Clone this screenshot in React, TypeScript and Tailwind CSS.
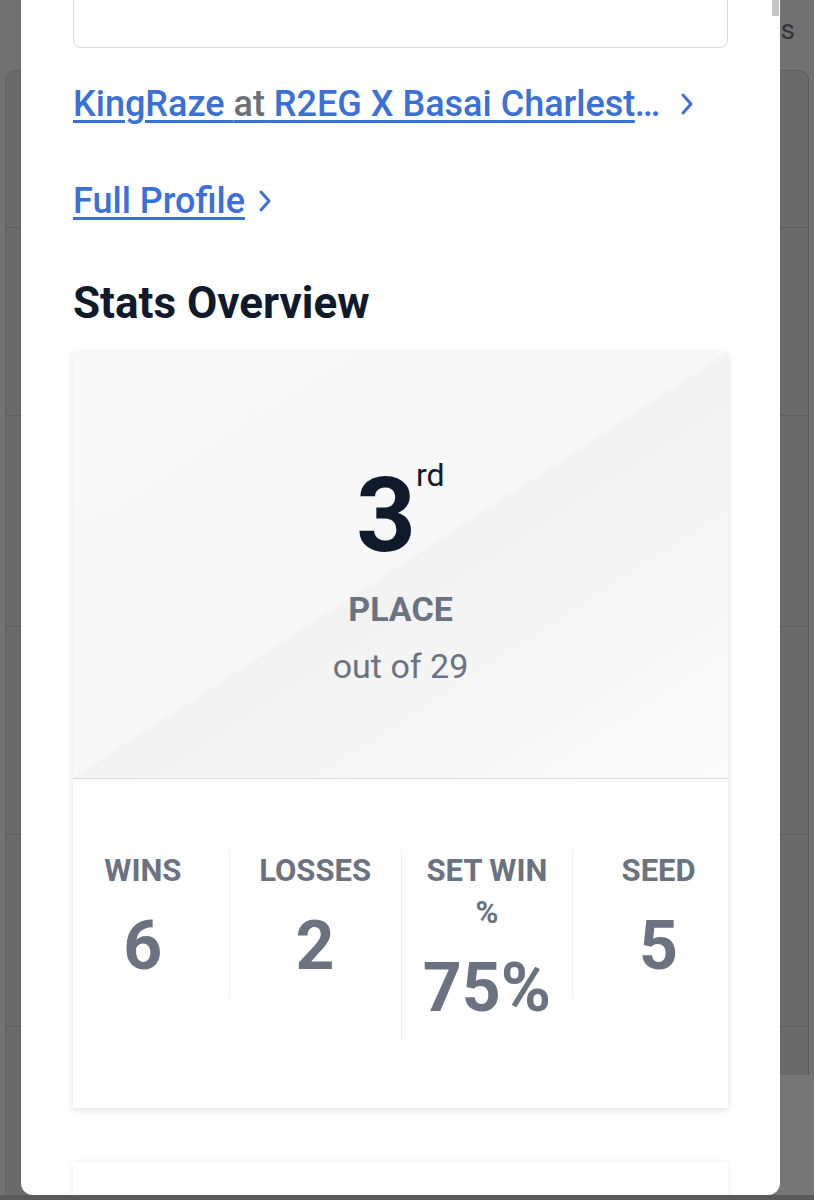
import React from "react";

function Chevron({ className }: { className?: string }) {
  return (
    <svg className={className} width="14" height="24" viewBox="0 0 14 24" fill="none">
      <path d="M3 3 L11 12 L3 21" stroke="#3b70d6" strokeWidth="3" strokeLinecap="round" strokeLinejoin="round" />
    </svg>
  );
}

function Stat({ label, value, first }: { label: string; value: string; first?: boolean }) {
  return (
    <div className="px-4">
      <div
        className={`flex flex-col items-center pb-[18px] ${first ? "" : "border-l border-[#eeeeee]"} -ml-4 pl-4`}
      >
        <div className="text-center text-[31px] leading-[42px] font-bold text-[#6b7280]">{label}</div>
        <div className="mt-[20px] text-center text-[68px] leading-[68px] font-bold text-[#6b7280]">{value}</div>
      </div>
    </div>
  );
}

export default function App() {
  return (
    <div className="relative w-[814px] h-[1200px] overflow-hidden bg-[#717171] [font-family:Roboto,'Noto_Sans',sans-serif]">
      {/* background page */}
      <div className="flex flex-col h-full">
        <div className="h-[70px] flex justify-end pr-[19px] pt-[14px]">
          <span className="text-[28px] leading-[32px] text-[#353535]">Results</span>
        </div>
        <div className="mx-[5px] flex-1 rounded-t-[10px] border border-b-0 border-[#5f5f5f] bg-[#6a6a6a] flex flex-col">
          <div className="h-[157px] border-b border-[#5e5e5e]" />
          <div className="h-[188px] border-b border-[#5e5e5e]" />
          <div className="h-[211px] border-b border-[#5e5e5e]" />
          <div className="h-[208px] border-b border-[#5e5e5e]" />
          <div className="h-[192px] border-b border-[#5e5e5e]" />
          <div className="flex-1" />
        </div>
      </div>
      <div className="absolute right-0 top-[1075px] w-[40px] h-[125px] bg-[#767676]" />
      <div className="absolute left-0 bottom-0 w-full h-[5px] bg-[#5a5a5a]" />

      {/* modal */}
      <div className="absolute left-[21px] top-0 w-[759px] h-[1195px] bg-white rounded-b-[12px] overflow-hidden">
        <div className="absolute right-[1px] top-0 w-[7px] h-[16px] bg-[#c4c4c4]" />
        <div className="px-[52px] flex flex-col">
          <div className="-mt-[40px] h-[88px] rounded-[8px] border border-[#d7dadf] bg-white" />

          <div className="mt-[34px] h-[44px] flex items-center">
            <div className="w-[592px] truncate text-[36px] leading-[44px] font-medium text-[#3b70d6]">
              <a className="underline decoration-[3px] underline-offset-[4px]">
                KingRaze <span className="text-[#6b6f76]">at</span> R2EG X Basai Charleston Weekly #12
              </a>
            </div>
            <Chevron className="ml-[15px]" />
          </div>

          <div className="mt-[53px] h-[44px] flex items-center">
            <a className="text-[36px] leading-[44px] font-medium text-[#3b70d6] underline decoration-[3px] underline-offset-[4px]">
              Full Profile
            </a>
            <Chevron className="ml-[13px]" />
          </div>

          <h2 className="mt-[54px] text-[44px] leading-[52px] font-bold text-[#0f1a2b]">Stats Overview</h2>

          <div className="mt-[23px] bg-white shadow-[0_2px_7px_rgba(0,0,0,0.13)]">
            <div className="pt-[107px] pb-[92px] border-b border-[#dcdcdc] bg-[linear-gradient(to_bottom_right,#f8f8f8_0%,#f7f7f7_50%,#f2f2f2_50%,#fbfbfb_100%)] flex flex-col items-center">
              <div className="flex items-start justify-center">
                <span className="mt-[5px] text-[104px] leading-[104px] font-bold text-[#0f1a2b]">3</span>
                <span className="text-[32px] leading-[32px] text-[#0f1a2b]">rd</span>
              </div>
              <div className="mt-[21px] text-[34px] leading-[40px] font-bold text-[#6b7280]">PLACE</div>
              <div className="mt-[17px] text-[34px] leading-[40px] text-[#6b7280]">out of 29</div>
            </div>
            <div className="pt-[71px] pb-[68px] overflow-hidden">
              <div className="-mx-4 grid grid-cols-4 items-start">
                <Stat label="WINS" value="6" first />
                <Stat label="LOSSES" value="2" />
                <Stat label="SET WIN %" value="75%" />
                <Stat label="SEED" value="5" />
              </div>
            </div>
          </div>

          <div className="mt-[54px] h-[200px] bg-white shadow-[0_0_6px_rgba(0,0,0,0.08)]" />
        </div>
      </div>
    </div>
  );
}
